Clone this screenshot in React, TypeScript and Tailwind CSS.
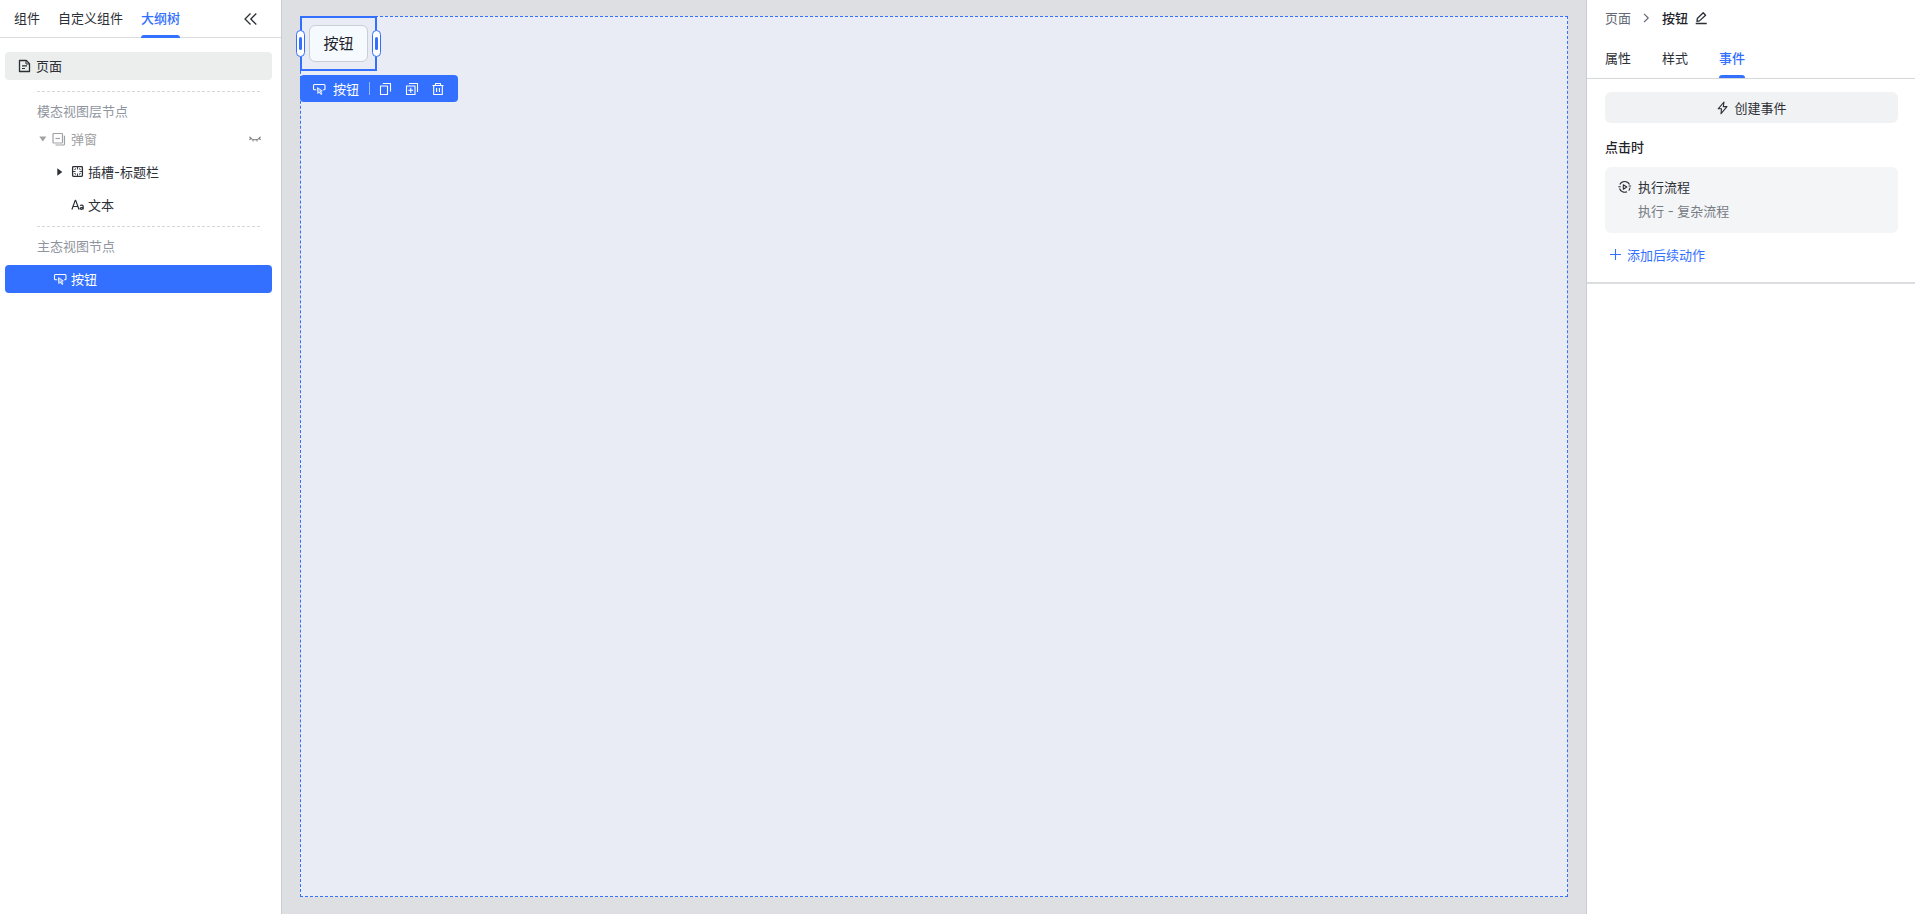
import React from 'react';

type IconProps = { className?: string };

const Icon: React.FC<IconProps & { size?: number; children: React.ReactNode }> = ({
  className = '',
  size = 14,
  children,
}) => (
  <svg
    width={size}
    height={size}
    viewBox={`0 0 ${size} ${size}`}
    fill="none"
    stroke="currentColor"
    strokeWidth="1.1"
    strokeLinejoin="round"
    className={`shrink-0 ${className}`}
    aria-hidden="true"
  >
    {children}
  </svg>
);

const CollapseIcon = () => (
  <Icon>
    <path d="M7.5 1.5 2 7l5.5 5.5M13.3 1.5 7.8 7l5.5 5.5" strokeWidth="1.3" />
  </Icon>
);

const PageIcon = () => (
  <Icon>
    <path d="M2.5 1.5h6.8l3.2 3.2v7.8h-10z" strokeWidth="1.3" />
    <path d="M9 1.5v3.5h3.5" strokeWidth="1" />
    <path d="M5 6.8h5M5 9.5h3" strokeWidth="1.2" />
  </Icon>
);

const ModalIcon = () => (
  <Icon>
    <rect x="1" y="1.5" width="9.5" height="9.5" rx="0.8" strokeWidth="1.2" />
    <path d="M3.5 6.5H8" strokeWidth="1.2" />
    <path d="M12.5 3.8V12a1 1 0 0 1-1 1h-8" strokeWidth="1.2" />
  </Icon>
);

const EyeClosedIcon = () => (
  <Icon>
    <path d="M1.5 4.8C2.8 7 4.7 7.8 7 7.8s4.2-.8 5.5-3M2.8 6.5 1.4 7.8M5.2 7.6l-.4 1.7M8.8 7.6l.4 1.7M11.2 6.5l1.4 1.3" />
  </Icon>
);

const SlotIcon = () => (
  <Icon>
    <rect x="1.600" y="1.600" width="9.800" height="9.800" rx="0.8" strokeWidth="1.300" />
    <path d="M6.500 2v2.500M6.500 8.500V11M2 6.500h2.500M8.500 6.500H11" strokeWidth="0.900" />
    <path d="M3 4.500h1.500V3M10 4.500H8.500V3M3 8.500h1.500V10M10 8.500H8.500V10" strokeWidth="0.600" />
  </Icon>
);

const TextIcon = () => (
  <Icon>
    <path d="M.9 11.5 4.2 2.4h.5L8 11.5M2.1 8.5h4.7" strokeWidth="1.2" />
    <path d="M9.1 7.7c.7-.7 3.1-.9 3.1.8v3M12.2 9.3c-1.500 0-3.100 0-3.100 1.100 0 1.300 2.400 1.100 3.100-.1" strokeWidth="1.2" />
  </Icon>
);

const ButtonIcon = () => (
  <Icon>
    <path d="M4.300 7.800H2.500a1 1 0 0 1-1-1V3.500a1 1 0 0 1 1-1h9.500a1 1 0 0 1 1 1v3.300a1 1 0 0 1-1 1h-.8" />
    <path d="m5.500 5.700.4 5.800 1.400-1.400 1.700 2.400 1-.7-1.600-2.400 1.900-.5z" fill="currentColor" fillOpacity="0.4" strokeWidth="0.9" />
  </Icon>
);

const CopyIcon = () => (
  <Icon>
    <path d="M1.5 4h7v8.5h-7z" />
    <path d="M3.8 1.5h7.7v8" />
  </Icon>
);

const DuplicateIcon = () => (
  <Icon>
    <path d="M1.5 4H10v8.5H1.5zM4 1.5h8.500V10M5.750 5.800v4.900M3.300 8.250h4.900" />
  </Icon>
);

const TrashIcon = () => (
  <Icon>
    <path d="M1.5 3.5h11M4.5 3.5v-2h5v2M2.7 3.5v9h8.600v-9M5.600 6v4M8.400 6v4" />
  </Icon>
);

const ChevronIcon = () => (
  <Icon size={10}>
    <path d="m3 .8 4.200 4.200L3 9.200" strokeWidth="1.2" />
  </Icon>
);

const EditIcon = () => (
  <Icon>
    <path d="m3 10.300.3-2.800L9.200 1.800l2.400 2.400-6.100 5.700zM1.700 12.500h11" strokeWidth="1.3" />
  </Icon>
);

const BoltIcon = () => (
  <Icon>
    <path d="M8 1 2.200 7.800h3.300L5 12.700l6-7.100H7.300z" />
  </Icon>
);

const FlowIcon = () => (
  <Icon>
    <path d="M1.800 4.400A5.500 5.500 0 0 1 11.500 4.400M12 7.500A5.500 5.500 0 0 1 10.700 10.600M9 11.800A5.500 5.500 0 0 1 1.500 8.500M.3 6.800h2.500M10.600 6h2.500" />
    <path d="M5.300 4.800v4.400L8.800 7z" />
  </Icon>
);

const PlusIcon = () => (
  <Icon>
    <path d="M6.5 1v11M1 6.5h11" />
  </Icon>
);

const CaretDown = () => (
  <svg width="8" height="6" viewBox="0 0 8 6" fill="currentColor" className="shrink-0" aria-hidden="true">
    <path d="M.3.5h7L3.800 5.500z" />
  </svg>
);

const CaretRight = () => (
  <svg width="6" height="8" viewBox="0 0 6 8" fill="currentColor" className="shrink-0" aria-hidden="true">
    <path d="M.3.3v7.400L5.300 4z" />
  </svg>
);

const leftTabs = ['组件', '自定义组件', '大纲树'];
const rightTabs = ['属性', '样式', '事件'];

const OutlinePanel: React.FC = () => (
  <aside className="flex w-[282px] shrink-0 flex-col border-r border-[#c9cdd4] bg-white">
    <div className="flex h-[38px] items-center border-b border-[#dadbdd] pr-6 pl-3.5">
      <div className="flex h-full gap-[18px]">
        {leftTabs.map(tab => (
          <button
            key={tab}
            className={`relative pb-0.5 ${
              tab === '大纲树'
                ? 'font-medium text-[#3370ff] after:absolute after:inset-x-0 after:-bottom-px after:h-[3px] after:rounded-t-sm after:bg-[#3370ff]'
                : ''
            }`}
          >
            {tab}
          </button>
        ))}
      </div>
      <button className="ml-auto" aria-label="收起">
        <CollapseIcon />
      </button>
    </div>

    <div className="flex flex-col pt-3.5 pr-[9px] pl-[5px]">
      <button className="flex h-7 items-center gap-[5px] rounded bg-[#eceeee] pl-3">
        <PageIcon />
        页面
      </button>

      {/* 模态视图层 */}
      <div className="mt-[11px] mr-3 ml-8 border-t border-dashed border-[#d5d7da]" />
      <div className="mt-[9px] ml-8 h-5 text-[#8f959e]">模态视图层节点</div>
      <div className="mt-1 flex h-7 items-center pr-2.5 pl-[34px] text-[#a0a1a3]">
        <button className="flex items-center gap-[5px]">
          <CaretDown />
          <ModalIcon />
          <span>弹窗</span>
        </button>
        <button className="ml-auto text-[#7d7f82]" aria-label="显示弹窗">
          <EyeClosedIcon />
        </button>
      </div>
      <button className="mt-[5px] flex h-7 items-center gap-2 pl-[52px]">
        <CaretRight />
        <span className="flex items-center gap-[3px]">
          <SlotIcon />
          插槽-标题栏
        </span>
      </button>
      <button className="mt-[5px] flex h-7 items-center gap-[3px] pl-[66px]">
        <TextIcon />
        文本
      </button>

      {/* 主态视图 */}
      <div className="mt-[7px] mr-3 ml-8 border-t border-dashed border-[#d5d7da]" />
      <div className="mt-[9px] ml-8 h-5 text-[#8f959e]">主态视图节点</div>
      <button className="mt-[9px] flex h-7 items-center gap-1 rounded bg-[#3370ff] pl-12 text-white">
        <ButtonIcon />
        按钮
      </button>
    </div>
  </aside>
);

const ResizeHandle: React.FC<IconProps> = ({ className = '' }) => (
  <span
    className={`absolute top-3 flex h-[27px] w-[9px] items-center justify-center rounded-full border border-[#3370ff] bg-white ${className}`}
  >
    <span className="h-[13px] w-[3px] rounded-full bg-[#3370ff]" />
  </span>
);

const Canvas: React.FC = () => (
  <main className="flex min-w-0 flex-1 bg-[#dedfe3] px-[18px] pt-4 pb-[17px]">
    <div className="relative flex-1 border border-dashed border-[#3370ff] bg-[#e9ecf5]">
      <div className="absolute -top-px -left-px border-2 border-[#3370ff] p-[7px]">
        <button className="block h-[37px] w-[59px] rounded-md border border-[#c9cdd4] bg-[#f5faff] text-[15px] text-[#1f2329]">
          按钮
        </button>
        <ResizeHandle className="-left-1.5" />
        <ResizeHandle className="-right-1.5" />
      </div>
      <div className="absolute top-[58px] -left-px flex h-[27px] w-[158px] items-center rounded bg-[#3370ff] pl-3 whitespace-nowrap text-white">
        <ButtonIcon />
        <span className="ml-[7px]">按钮</span>
        <span className="ml-2.5 h-[13px] w-px bg-white/50" />
        <div className="ml-[9px] flex gap-3">
          <button aria-label="复制">
            <CopyIcon />
          </button>
          <button aria-label="创建副本">
            <DuplicateIcon />
          </button>
          <button aria-label="删除">
            <TrashIcon />
          </button>
        </div>
      </div>
    </div>
  </main>
);

const EventPanel: React.FC = () => (
  <aside className="w-[329px] shrink-0 border-l border-[#c9cdd4] bg-white">
    <div className="flex h-9 items-center pl-[18px]">
      <a href="#" className="text-[#646a73]">
        页面
      </a>
      <span className="mr-[11px] ml-2.5 text-[#646a73]">
        <ChevronIcon />
      </span>
      <span className="font-medium text-[#1f2329]">按钮</span>
      <button className="ml-1.5" aria-label="重命名">
        <EditIcon />
      </button>
    </div>
    <div className="flex h-[43px] gap-[31px] border-b border-[#d5d7da] pl-[18px]">
      {rightTabs.map(tab => (
        <button
          key={tab}
          className={`relative pt-0.5 ${
            tab === '事件'
              ? 'font-medium text-[#3370ff] after:absolute after:inset-x-0 after:bottom-0 after:h-[3px] after:rounded-t-sm after:bg-[#3370ff]'
              : ''
          }`}
        >
          {tab}
        </button>
      ))}
    </div>

    <div className="border-b-2 border-[#dcdde0] pt-[13px] pr-[17px] pb-[17px] pl-[18px]">
      <button className="flex h-[31px] w-full items-center justify-center gap-1 rounded-md bg-[#f1f2f4]">
        <BoltIcon />
        创建事件
      </button>
      <h3 className="mt-3.5 h-5 font-medium text-[#1f2329]">点击时</h3>
      <div className="mt-2.5 flex h-[66px] gap-1.5 rounded-md bg-[#f4f5f7] pt-2.5 pl-[13px]">
        <span className="pt-[3px]">
          <FlowIcon />
        </span>
        <div>
          <p>执行流程</p>
          <p className="mt-1 text-[#767b84]">执行 - 复杂流程</p>
        </div>
      </div>
      <button className="mt-3 ml-1 flex h-5 items-center gap-1 text-[#3370ff]">
        <PlusIcon />
        添加后续动作
      </button>
    </div>
  </aside>
);

const App: React.FC = () => (
  <div className="flex h-screen overflow-hidden font-['Inter','Noto_Sans_CJK_SC',sans-serif] text-[13px] leading-5 text-[#2b2f36]">
    <OutlinePanel />
    <Canvas />
    <EventPanel />
  </div>
);

export default App;
